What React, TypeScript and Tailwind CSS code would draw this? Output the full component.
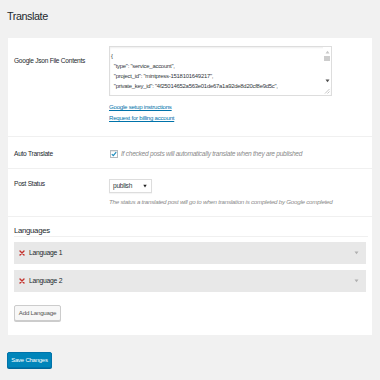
import type { ReactNode } from 'react';

const FONT = { fontFamily: '"Liberation Sans", Arial, sans-serif' };

const JSON_LINES = [
  '{',
  '  "type": "service_account",',
  '  "project_id": "mintpress-1518101649217",',
  '  "private_key_id": "4f25014652a563e01de67a1a92de8d20cf8e9d5c",',
];

function Row({ label, labelPad, children, className }: { label: string; labelPad: string; children: ReactNode; className: string }) {
  return (
    <div className={`flex border-b border-[#f0f0f0] ${className}`}>
      <div className={`w-[101px] shrink-0 pl-[6px] text-[6.6px] leading-[10px] tracking-[-0.04em] text-[#23282d] ${labelPad}`}>
        {label}
      </div>
      <div className="min-w-0 flex-1">{children}</div>
    </div>
  );
}

function FakeTextarea() {
  return (
    <div className="relative h-[50px] w-[223px] overflow-hidden border border-[#dddddd] bg-white shadow-[inset_0_1px_2px_rgba(0,0,0,0.07)]">
      <div className="whitespace-pre pl-[1px] pt-[4px] text-[5.9px] leading-[10px] tracking-[-0.04em] text-[#32373c]">
        {JSON_LINES.map((l) => (
          <div key={l}>{l}</div>
        ))}
      </div>
      <div className="absolute right-0 top-0 flex h-[40px] w-[8px] flex-col items-center bg-white pt-[3px]">
        <svg width="5" height="4" viewBox="0 0 5 4">
          <path d="M0.5 3.5 L2.5 0.8 L4.5 3.5 Z" fill="#c8c8c8" />
        </svg>
        <div className="mt-[2px] h-[5px] w-[6px] bg-[#cdcdcd]" />
        <div className="flex-1" />
        <svg width="5" height="4" viewBox="0 0 5 4" className="mb-[4px]">
          <path d="M0.5 0.5 L2.5 3.2 L4.5 0.5 Z" fill="#505050" />
        </svg>
      </div>
      <svg width="6" height="6" viewBox="0 0 6 6" className="absolute bottom-[1px] right-[1px]">
        <path d="M5.5 1 L1 5.5 M5.5 3.5 L3.5 5.5" stroke="#a0a0a0" strokeWidth="0.6" />
      </svg>
    </div>
  );
}

function LanguageBar({ name }: { name: string }) {
  return (
    <div className="flex h-[22px] items-center bg-[#e8e8e8] pl-[5px] pr-[7px]">
      <svg width="6" height="6" viewBox="0 0 6 6" className="mr-[4px]">
        <path d="M1 1 L5 5 M5 1 L1 5" stroke="#c4302b" strokeWidth="1.4" strokeLinecap="round" />
      </svg>
      <span className="text-[6.8px] tracking-[-0.04em] text-[#23282d]">{name}</span>
      <div className="flex-1" />
      <svg width="5" height="4" viewBox="0 0 5 4">
        <path d="M0.5 0.5 L2.5 3.3 L4.5 0.5 Z" fill="#b0b0b0" />
      </svg>
    </div>
  );
}

export default function App() {
  return (
    <div className="h-[380px] w-[380px] overflow-hidden bg-[#f1f1f1]" style={FONT}>
      <h1 className="px-[7px] pt-[9px] text-[10.8px] leading-[14px] font-normal tracking-[-0.04em] text-[#23282d]">Translate</h1>

      <div className="ml-[8px] mt-[15px] w-[364px] bg-white">
        <Row label="Google Json File Contents" labelPad="pt-[10px]" className="pb-[13px] pt-[8px]">
          <FakeTextarea />
          <div className="mt-[5px] flex flex-col items-start text-[6.1px] leading-[11px] tracking-[-0.04em]">
            <a className="text-[#0073aa] underline">Google setup instructions</a>
            <a className="text-[#0073aa] underline">Request for billing account</a>
          </div>
        </Row>

        <Row label="Auto Translate" labelPad="pt-[12px]" className="h-[32px]">
          <div className="flex items-center gap-[3px] pl-[1px] pt-[12px]">
            <div className="flex h-[8px] w-[8px] items-center justify-center border border-[#b4b9be] bg-white shadow-[inset_0_1px_1px_rgba(0,0,0,0.1)]">
              <svg width="6" height="6" viewBox="0 0 6 6">
                <path d="M0.8 3.2 L2.3 4.7 L5.2 1.2" stroke="#1e8cbe" strokeWidth="1.2" fill="none" />
              </svg>
            </div>
            <span className="text-[6.6px] leading-[10px] tracking-[-0.04em] italic text-[#8a8a8a]">
              If checked posts will automatically translate when they are published
            </span>
          </div>
        </Row>

        <Row label="Post Status" labelPad="pt-[10px]" className="h-[48px] pt-0">
          <div className="pt-[10px]">
            <div className="flex h-[14px] w-[43px] items-center justify-between border border-[#dddddd] bg-white pl-[3px] pr-[4px] shadow-[0_1px_1px_rgba(0,0,0,0.04)]">
              <span className="text-[6.6px] tracking-[-0.04em] text-[#32373c]">publish</span>
              <svg width="4" height="4" viewBox="0 0 4 4">
                <path d="M0.3 0.8 L2 3.4 L3.7 0.8 Z" fill="#222222" />
              </svg>
            </div>
            <p className="mt-[4px] whitespace-nowrap text-[6.2px] leading-[10px] tracking-[-0.04em] italic text-[#8a8a8a]">
              The status a translated post will go to when translation is completed by Google completed
            </p>
          </div>
        </Row>

        <div className="px-[6px] pb-[13px] pt-[8px]">
          <h2 className="mr-[-2px] border-b border-[#f0f0f0] text-[7.8px] leading-[11px] font-normal tracking-[-0.04em] text-[#23282d]">
            Languages
          </h2>
          <div className="mt-[5px] flex flex-col gap-[6px]">
            <LanguageBar name="Language 1" />
            <LanguageBar name="Language 2" />
          </div>
          <button className="mt-[13px] h-[16px] w-[47px] whitespace-nowrap rounded-[2px] border border-[#cccccc] bg-[#f7f7f7] text-[6.2px] tracking-[-0.04em] text-[#555555] shadow-[0_1px_0_#cccccc]">
            Add Language
          </button>
        </div>
      </div>

      <button className="ml-[7px] mt-[17px] h-[16px] w-[45px] whitespace-nowrap rounded-[2px] border border-[#0073aa] bg-[#0085ba] text-[6px] tracking-[-0.04em] text-white shadow-[0_1px_0_#006799]">
        Save Changes
      </button>
    </div>
  );
}
